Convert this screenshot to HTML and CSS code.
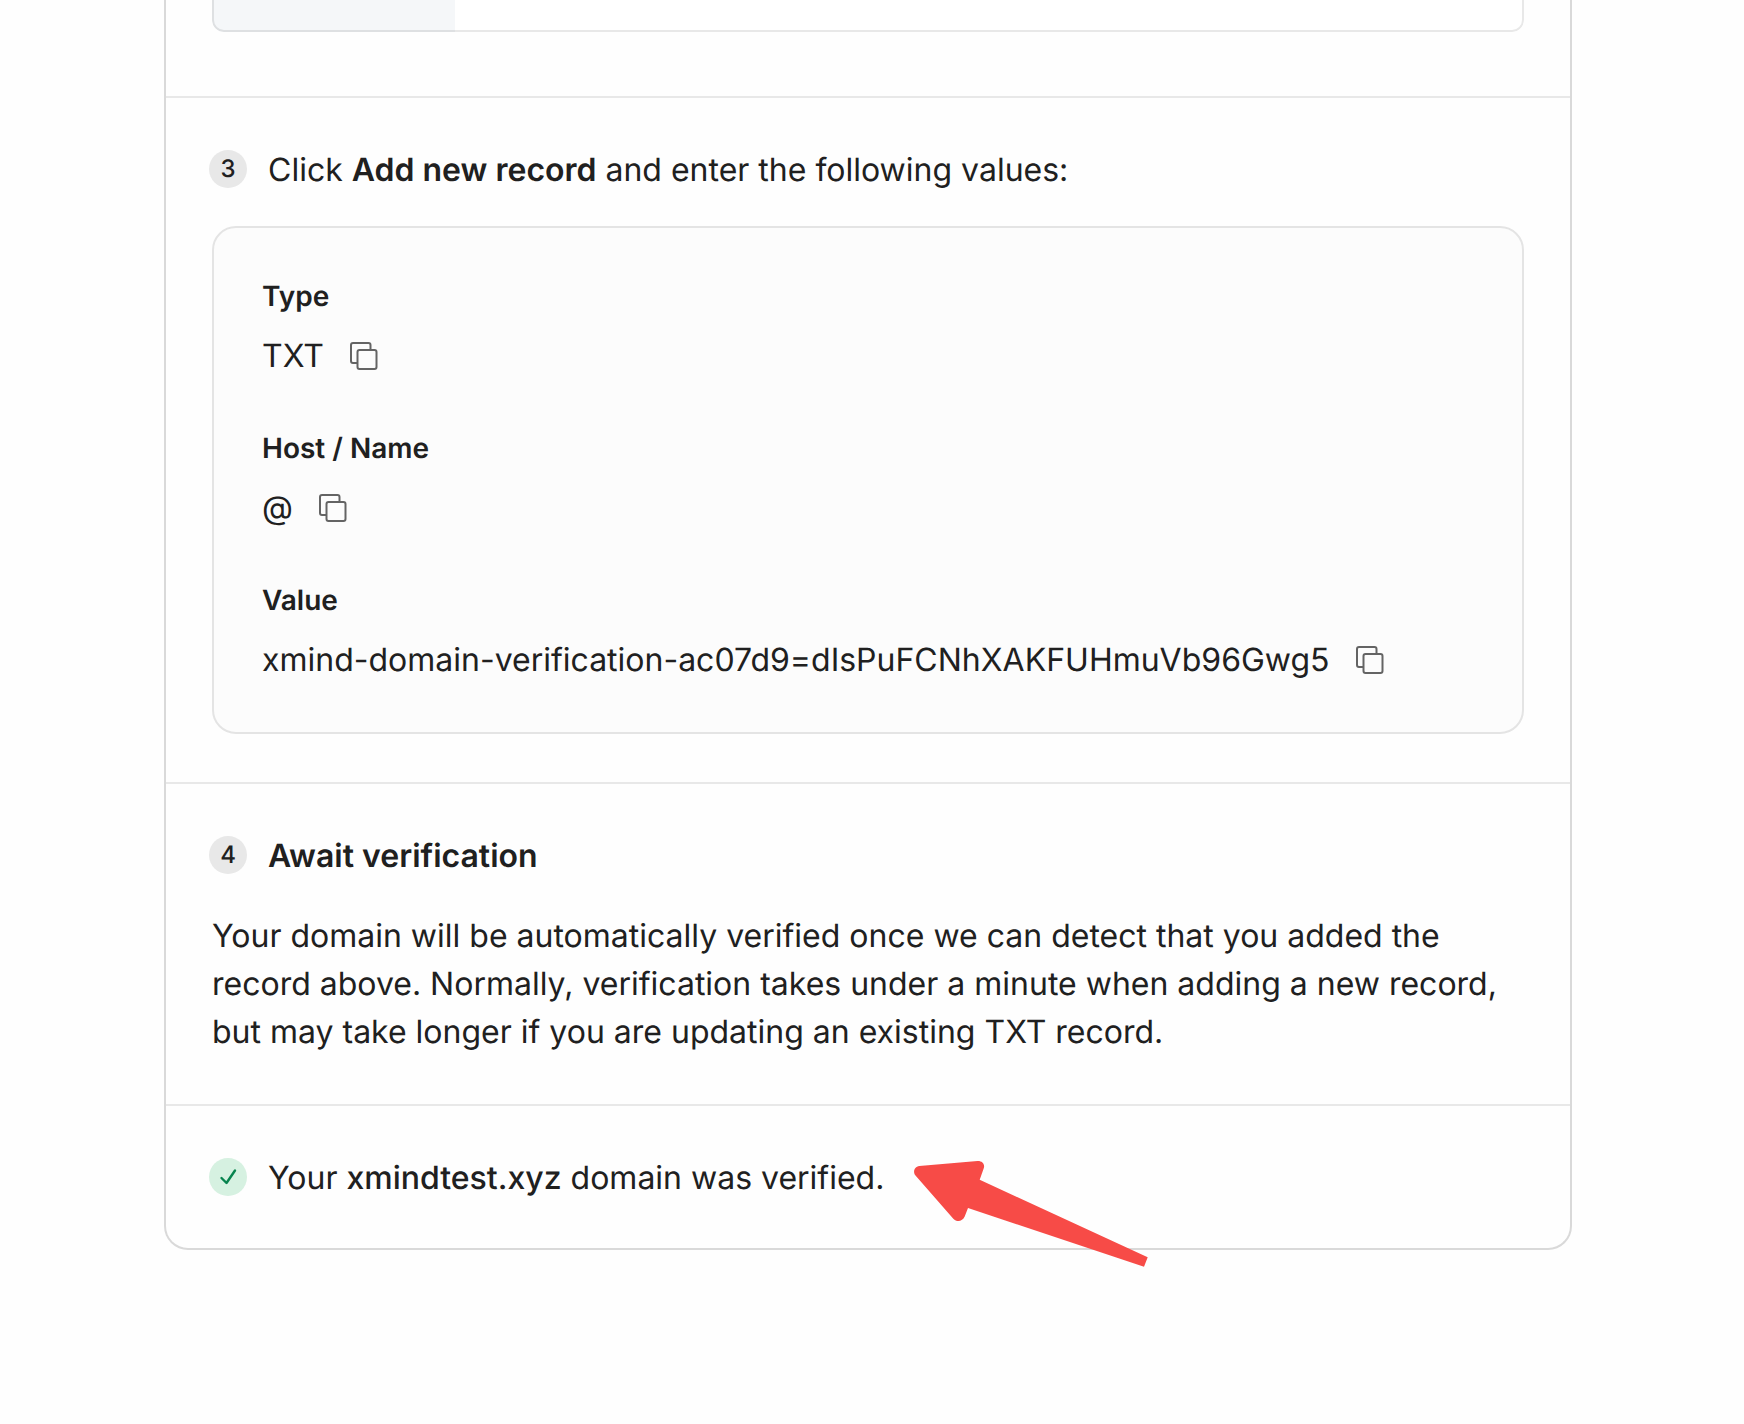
FILE: index.html
```html
<!DOCTYPE html>
<html lang="en">
<head>
  <meta charset="UTF-8">
  <meta name="viewport" content="width=device-width, initial-scale=1.0">
  <title>Verify domain</title>
  <link rel="stylesheet" href="styles.css">
</head>
<body>

  <!-- copy icon, used by every record row -->
  <svg class="sprite" aria-hidden="true">
    <symbol id="icon-copy" viewBox="0 0 32 32">
      <path d="M9 23H5A2 2 0 0 1 3 21V5A2 2 0 0 1 5 3H20.500A2 2 0 0 1 22.500 5V9" />
      <rect x="9.500" y="10" width="19" height="19" rx="2" />
    </symbol>
  </svg>

  <main class="card">
    <section class="step step-preview">
      <div class="preview">
        <div class="preview-side"></div>
      </div>
    </section>

    <section class="step">
      <div class="step-head">
        <span class="badge">3</span>
        <p>Click <b>Add new record</b> and enter the following values:</p>
      </div>
      <dl class="record">
        <div>
          <dt>Type</dt>
          <dd>
            <span>TXT</span>
            <button class="copy" type="button" aria-label="Copy type"><svg><use href="#icon-copy" /></svg></button>
          </dd>
        </div>
        <div>
          <dt>Host / Name</dt>
          <dd>
            <span>@</span>
            <button class="copy" type="button" aria-label="Copy host"><svg><use href="#icon-copy" /></svg></button>
          </dd>
        </div>
        <div>
          <dt>Value</dt>
          <dd>
            <span>xmind-domain-verification-ac07d9=dIsPuFCNhXAKFUHmuVb96Gwg5</span>
            <button class="copy" type="button" aria-label="Copy value"><svg><use href="#icon-copy" /></svg></button>
          </dd>
        </div>
      </dl>
    </section>

    <section class="step">
      <div class="step-head">
        <span class="badge">4</span>
        <h2>Await verification</h2>
      </div>
      <p class="step-text">Your domain will be automatically verified once we can detect that you added the record above. Normally, verification takes under a minute when adding a new record, but may take longer if you are updating an existing TXT record.</p>
    </section>

    <section class="step step-result">
      <div class="step-head">
        <span class="badge badge-done">
          <svg viewBox="0 0 38 38" aria-hidden="true"><path d="M12.500 20L17.500 25L26 12.500" /></svg>
        </span>
        <p>Your <span class="domain">xmindtest.xyz</span> domain was verified.</p>
      </div>
      <svg class="arrow" viewBox="0 0 236 108" aria-hidden="true">
        <path d="M6.300 6L64.500 1C69.500 .8 72.500 4.500 70.500 9L66.700 19.700L234.700 97.300L231 106.700L55 48L51.700 56.500C49.500 61.500 44 62.500 40.300 58.700L2.500 15.500C-.5 12 1.500 6.500 6.300 6Z" />
      </svg>
    </section>
  </main>

</body>
</html>
```
FILE: styles.css
```css
* {
  box-sizing: border-box;
}

body, p, h2, dl, dd {
  margin: 0;
}

body {
  min-height: 100vh;
  padding: 0 172px 0 164px;
  background: #fefefe;
  color: #202020;
  font-family: Inter, "Liberation Sans", sans-serif;
  font-size: 32px;
  line-height: 48px;
  text-rendering: geometricPrecision;
}

b, h2 {
  font-size: 32px;
  font-weight: 600;
}

.domain {
  font-weight: 500;
}

.sprite {
  position: absolute;
  width: 0;
  height: 0;
}

.card {
  border: 2px solid #d9d9d9;
  border-top: 0;
  border-radius: 0 0 24px 24px;
}

.step {
  padding: 48px 46px;
  border-bottom: 2px solid #e8e8e8;
}

/* screenshot of the registrar page */
.step-preview {
  padding-top: 0;
  padding-bottom: 64px;
}

.preview {
  position: relative;
  height: 32px;
  border-radius: 0 0 12px 12px;
  overflow: hidden;
  background: #fff;
}

.preview::after {
  content: "";
  position: absolute;
  inset: 0;
  border: 2px solid rgba(0, 0, 0, 0.09);
  border-top: 0;
  border-radius: 0 0 12px 12px;
}

.preview-side {
  width: 243px;
  height: 100%;
  background: #f5f7f9;
}

.step-head {
  display: flex;
  align-items: flex-start;
  gap: 21px;
  margin-left: -3px;
}

.badge {
  flex: none;
  width: 38px;
  height: 38px;
  margin-top: 4px;
  border-radius: 50%;
  background: #e8e8e8;
  font-size: 24px;
  font-weight: 500;
  line-height: 38px;
  text-align: center;
}

.badge-done {
  background: #d6f1e1;
}

.badge svg {
  display: block;
  fill: none;
  stroke: #08844f;
  stroke-width: 2.4;
  stroke-linecap: round;
  stroke-linejoin: round;
}

.record {
  display: grid;
  gap: 48px;
  margin-top: 32px;
  padding: 48px;
  border: 2px solid #e4e4e4;
  border-radius: 24px;
  background: #fcfcfc;
}

.record dt {
  margin-bottom: 16px;
  font-size: 28px;
  font-weight: 600;
  line-height: 40px;
}

.record dd {
  display: flex;
  align-items: center;
  gap: 24px;
}

.copy {
  width: 32px;
  height: 32px;
  padding: 0;
  border: 0;
  background: none;
  cursor: pointer;
}

.copy svg {
  display: block;
  width: 32px;
  height: 32px;
  fill: none;
  stroke: #646464;
  stroke-width: 2;
}

.step-text {
  margin-top: 32px;
}

.step-result {
  position: relative;
  padding-bottom: 46px;
  border-bottom: 0;
}

/* callout arrow over the card edge */
.arrow {
  position: absolute;
  top: 54px;
  left: 747px;
  width: 236px;
  height: 108px;
  fill: #f74b47;
}
```
